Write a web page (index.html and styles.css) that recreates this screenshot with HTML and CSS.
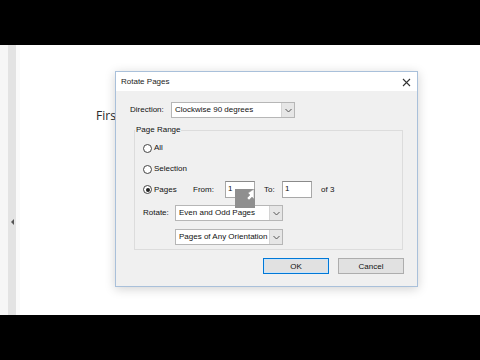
FILE: index.html
```html
<!DOCTYPE html>
<html>
<head>
<meta charset="utf-8">
<link rel="stylesheet" href="styles.css">
</head>
<body>
<div class="bar"></div>
<div class="viewer">
  <div class="gutter"></div>
  <div class="strip"><span class="tri"></span></div>
  <div class="page"><span class="first">First</span></div>
</div>
<div class="bar"></div>

<div class="dialog">
  <div class="titlebar">
    <span class="title">Rotate Pages</span>
    <svg class="close" width="9" height="9" viewBox="0 0 9 9"><path d="M1 1L8 8M8 1L1 8" stroke="#333" stroke-width="1.1"/></svg>
  </div>
  <div class="content">
    <div class="row dir-row">
      <span class="lbl dir-lbl">Direction:</span>
      <div class="combo dir-combo"><span class="val">Clockwise 90 degrees</span><span class="arrow"><svg width="7" height="5" viewBox="0 0 7 5"><path d="M0.5 1L3.5 4L6.5 1" fill="none" stroke="#555" stroke-width="1"/></svg></span></div>
    </div>
    <fieldset class="group">
      <legend>Page Range</legend>
      <div class="radio-row"><span class="radio"></span><span class="lbl">All</span></div>
      <div class="radio-row r-sel"><span class="radio"></span><span class="lbl">Selection</span></div>
      <div class="pages-row">
        <div class="radio-row pages-radio"><span class="radio checked"></span><span class="lbl">Pages</span></div>
        <span class="lbl from-lbl">From:</span>
        <div class="textbox">1</div>
        <span class="lbl to-lbl">To:</span>
        <div class="textbox">1</div>
        <span class="lbl of-lbl">of 3</span>
      </div>
      <div class="row rot-row">
        <span class="lbl rot-lbl">Rotate:</span>
        <div class="combo rot-combo"><span class="val">Even and Odd Pages</span><span class="arrow"><svg width="7" height="5" viewBox="0 0 7 5"><path d="M0.5 1L3.5 4L6.5 1" fill="none" stroke="#555" stroke-width="1"/></svg></span></div>
      </div>
      <div class="row orient-row">
        <div class="combo rot-combo"><span class="val">Pages of Any Orientation</span><span class="arrow"><svg width="7" height="5" viewBox="0 0 7 5"><path d="M0.5 1L3.5 4L6.5 1" fill="none" stroke="#555" stroke-width="1"/></svg></span></div>
      </div>
    </fieldset>
    <div class="buttons">
      <button class="btn ok">OK</button>
      <button class="btn">Cancel</button>
    </div>
  </div>
  <div class="cursor-box">
    <svg width="20" height="19" viewBox="0 0 20 19"><path d="M19 0L19 10L17 8L14 11L12 9L15 6L13 4Z" fill="#fff" stroke="#9a9a9a" stroke-width="0.6"/></svg>
  </div>
</div>
</body>
</html>
```

FILE: styles.css
```css
* { box-sizing: border-box; }
html, body { margin: 0; padding: 0; }
body {
  width: 480px;
  height: 360px;
  background: #000;
  font-family: "Liberation Sans", Arial, sans-serif;
  position: relative;
  overflow: hidden;
}
.bar { height: 45px; background: #000; }
.viewer {
  height: 270px;
  display: flex;
  background: #fff;
}
.gutter { width: 8px; background: #f6f6f6; }
.strip {
  width: 8px;
  background: #e3e3e3;
  position: relative;
}
.tri {
  position: absolute;
  left: 3px;
  top: 174px;
  width: 0; height: 0;
  border-top: 3px solid transparent;
  border-bottom: 3px solid transparent;
  border-right: 3px solid #555;
}
.page {
  flex: 1;
  background: #fff;
  border-left: 4px solid #fafafa;
  padding-left: 76px;
  padding-top: 61px;
}
.first {
  font-family: "Open Sans", "Liberation Sans", sans-serif;
  font-size: 12px;
  color: #2a2a2a;
}

.dialog {
  position: absolute;
  left: 115px;
  top: 71px;
  width: 303px;
  height: 216px;
  background: #f0f0f0;
  border: 1px solid #a9c0da;
  box-shadow: 0 2px 10px rgba(0,0,0,0.18);
  font-size: 8px;
  color: #111;
}
.titlebar {
  height: 19px;
  background: #fff;
  display: flex;
  align-items: center;
  justify-content: space-between;
  padding: 0 6px 0 5px;
}
.title { font-size: 8px; color: #222; }
.close { margin-top: 1px; }
.content {
  padding: 11px 13px 0 14px;
}
.row { display: flex; align-items: center; }
.lbl { line-height: 12px; white-space: nowrap; }
.dir-lbl { width: 41px; }
.combo {
  height: 16px;
  display: flex;
  align-items: stretch;
  background: #fff;
  border: 1px solid #b6b6b6;
}
.combo .val {
  flex: 1;
  padding-left: 3px;
  line-height: 14px;
  white-space: nowrap;
  overflow: hidden;
}
.combo .arrow {
  width: 13px;
  background: #e6e6e6;
  border-left: 1px solid #d4d4d4;
  display: flex;
  align-items: center;
  justify-content: center;
}
.dir-combo { width: 124px; }
.group {
  margin: 7px 0 0 4px;
  width: 269px;
  border: 1px solid #dcdcdc;
  padding: 7px 0 4px 8px;
}
.group legend {
  padding: 0 1px;
  margin-left: -8px;
  line-height: 10px;
  font-size: 8px;
}
.radio-row {
  display: flex;
  align-items: center;
  height: 12px;
}
.r-sel { margin-top: 9px; }
.radio {
  width: 9px;
  height: 9px;
  border-radius: 50%;
  border: 1px solid #444;
  background: #fff;
  margin-right: 2px;
  position: relative;
}
.radio.checked::after {
  content: "";
  position: absolute;
  left: 1.5px; top: 1.5px;
  width: 4px; height: 4px;
  border-radius: 50%;
  background: #222;
}
.pages-row {
  display: flex;
  align-items: center;
  margin-top: 6px;
  height: 17px;
}
.pages-radio { width: 50px; }
.from-lbl { width: 32px; }
.textbox {
  width: 30px;
  height: 17px;
  background: #fff;
  border: 1px solid #a8a8a8;
  border-top-color: #8a8a8a;
  padding-left: 2px;
  line-height: 14px;
  font-size: 8px;
}
.to-lbl { margin-left: 9px; width: 18px; }
.of-lbl { margin-left: 9px; }
.rot-row { margin-top: 7px; }
.rot-lbl { width: 32px; }
.rot-combo { width: 108px; }
.orient-row { margin-top: 8px; padding-left: 32px; }
.buttons {
  display: flex;
  justify-content: flex-end;
  gap: 9px;
  margin-top: 8px;
}
.btn {
  width: 66px;
  height: 16px;
  background: #e1e1e1;
  border: 1px solid #adadad;
  font-family: "Liberation Sans", Arial, sans-serif;
  font-size: 8px;
  color: #111;
  padding: 0;
}
.btn.ok {
  border: 1px solid #0078d7;
  box-shadow: inset 0 0 0 1px #cde4f7;
}
.cursor-box {
  position: absolute;
  left: 119px;
  top: 117px;
  width: 20px;
  height: 19px;
  background: #8f8f8f;
}
.cursor-box svg { display: block; }
```
